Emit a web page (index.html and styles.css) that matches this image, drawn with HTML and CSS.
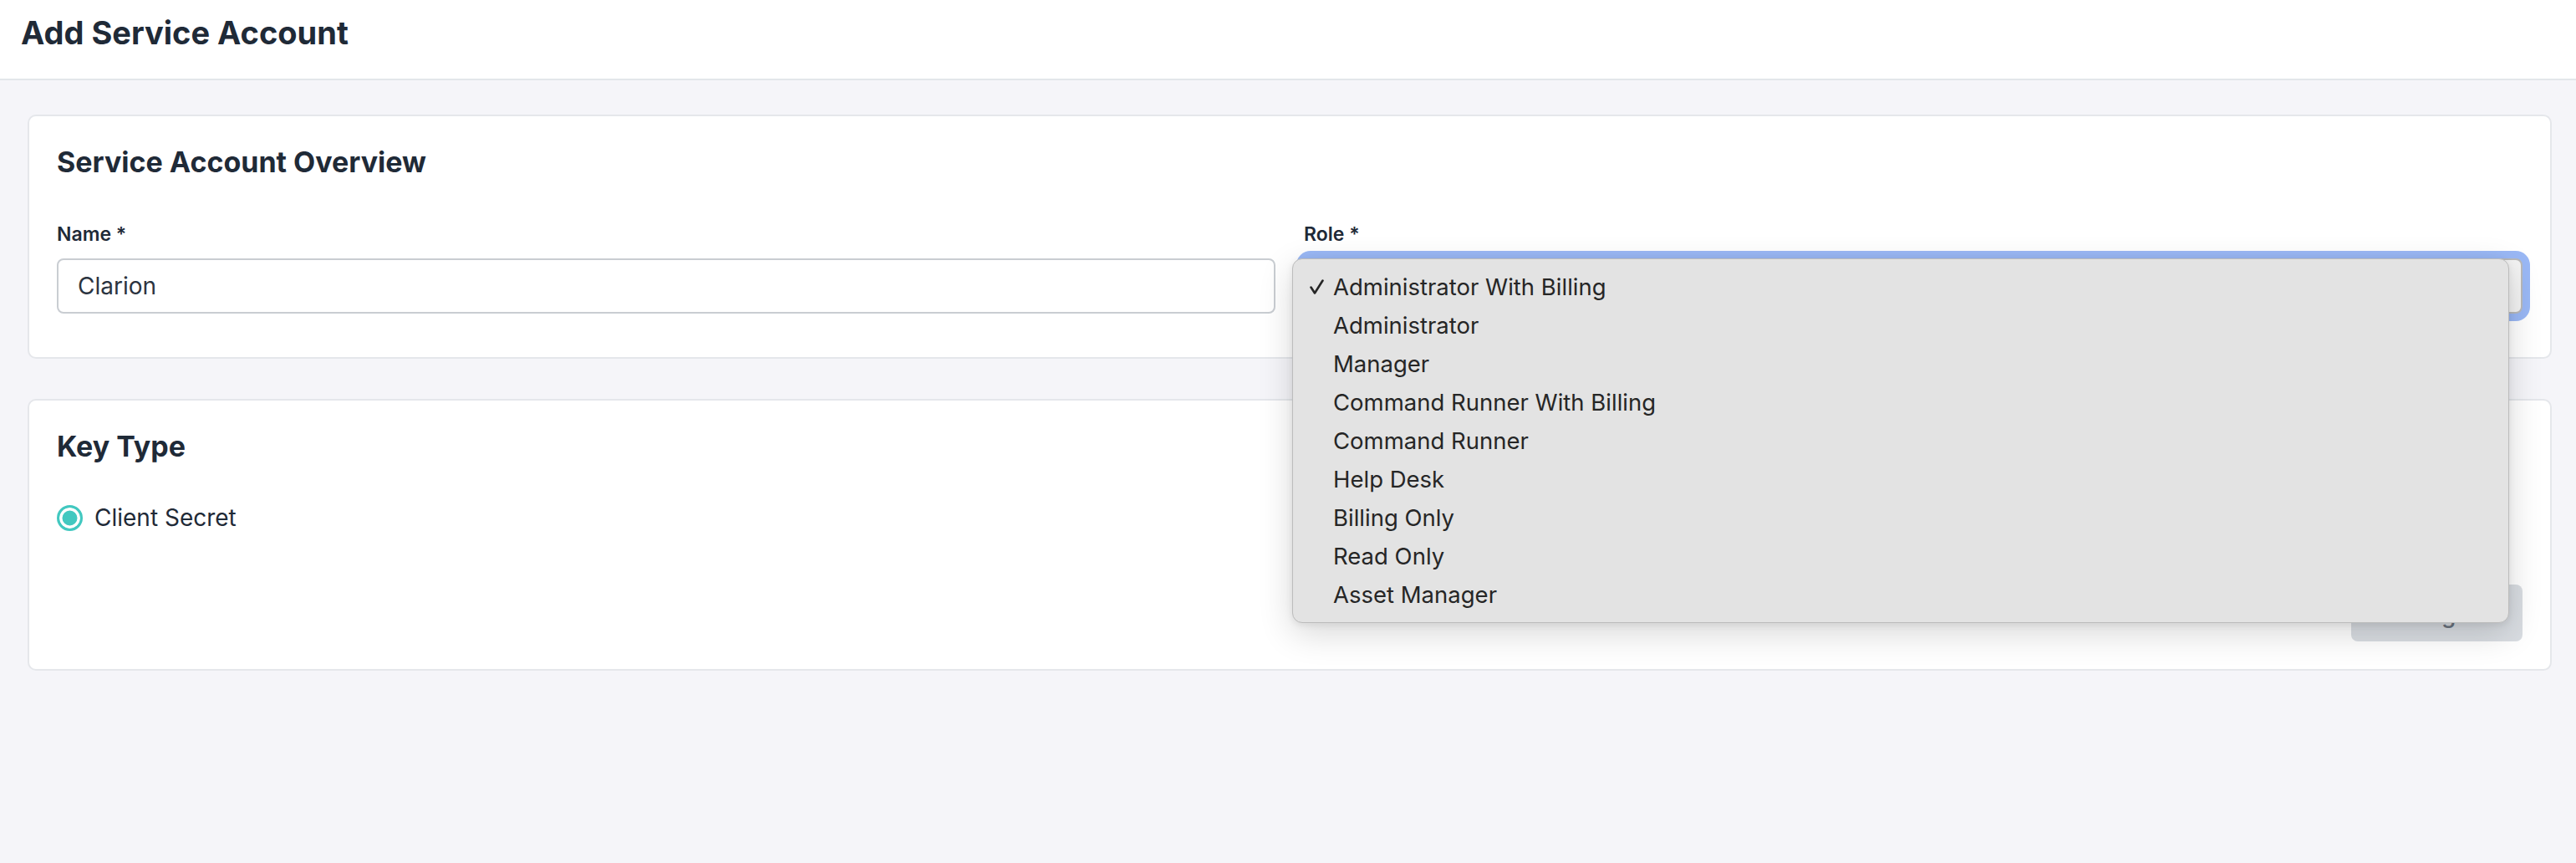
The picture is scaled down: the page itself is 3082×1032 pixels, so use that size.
FILE: index.html
```html
<!DOCTYPE html>
<html lang="en">
<head>
    <meta charset="UTF-8">
    <meta name="viewport" content="width=device-width, initial-scale=1.0">
    <title>Add Service Account</title>
    <link rel="stylesheet" href="styles.css">
</head>
<body>
    <header class="page-header">
        <h1>Add Service Account</h1>
    </header>

    <main class="content">
        <section class="card">
            <h2>Service Account Overview</h2>
            <div class="form-row">
                <div class="field">
                    <label for="name">Name *</label>
                    <input id="name" class="text-input" type="text" value="Clarion">
                </div>
                <div class="field">
                    <label>Role *</label>
                    <div class="select-wrap">
                        <div class="select focused"></div>
                        <!-- native popup menu, open -->
                        <div class="menu">
                            <div class="menu-item checked">
                                <span class="check">
                                    <svg width="17" height="18" viewBox="0 0 17 18"><path d="M1.5 9.5 L6 16.5 L15.5 1.5" fill="none" stroke="#262626" stroke-width="2.6" stroke-linecap="round" stroke-linejoin="round"/></svg>
                                </span>
                                <span>Administrator With Billing</span>
                            </div>
                            <div class="menu-item"><span class="check"></span><span>Administrator</span></div>
                            <div class="menu-item"><span class="check"></span><span>Manager</span></div>
                            <div class="menu-item"><span class="check"></span><span>Command Runner With Billing</span></div>
                            <div class="menu-item"><span class="check"></span><span>Command Runner</span></div>
                            <div class="menu-item"><span class="check"></span><span>Help Desk</span></div>
                            <div class="menu-item"><span class="check"></span><span>Billing Only</span></div>
                            <div class="menu-item"><span class="check"></span><span>Read Only</span></div>
                            <div class="menu-item"><span class="check"></span><span>Asset Manager</span></div>
                        </div>
                    </div>
                </div>
            </div>
        </section>

        <section class="card key-card">
            <h2>Key Type</h2>
            <div class="radio-row">
                <span class="radio checked"></span>
                <span class="radio-label">Client Secret</span>
            </div>
            <div class="card-footer">
                <button class="btn" disabled>Configure</button>
            </div>
        </section>
    </main>
</body>
</html>
```

FILE: styles.css
```css
* {
    margin: 0;
    padding: 0;
    box-sizing: border-box;
}

body {
    font-family: Inter, "Noto Sans", sans-serif;
    background: #f5f5f9;
    color: #1f2937;
    width: 3082px;
    height: 1032px;
    overflow: hidden;
}

.page-header {
    background: #fff;
    border-bottom: 2px solid #e3e6ea;
    height: 96px;
    padding: 15px 25px 0;
}

h1 {
    font-size: 38px;
    font-weight: 700;
    line-height: 48px;
    color: #1f2a37;
}

.content {
    padding: 41px 29px 0 33px;
}

.card {
    background: #fff;
    border: 2px solid #e5e7eb;
    border-radius: 10px;
    padding: 35px 33px 33px;
    margin-bottom: 48px;
}

h2 {
    font-size: 34px;
    font-weight: 700;
    line-height: 40px;
    color: #1f2a37;
}

.form-row {
    display: grid;
    grid-template-columns: 1fr 1fr;
    gap: 34px;
    margin-top: 53px;
    margin-bottom: 19px;
}

.field label {
    display: block;
    font-size: 23px;
    font-weight: 600;
    line-height: 27px;
    color: #1f2a37;
    margin-bottom: 15px;
}

.text-input {
    display: block;
    width: 100%;
    height: 66px;
    border: 2px solid #c9cdd2;
    border-radius: 8px;
    padding: 0 23px;
    font-family: inherit;
    font-size: 28px;
    color: #2b3440;
    background: #fff;
    outline: none;
}

.select-wrap {
    position: relative;
}

.select {
    height: 66px;
    border: 2px solid #b9b9b9;
    border-radius: 8px;
    background: #f3f3f3;
}

.select.focused {
    box-shadow: 0 0 0 9px #9ab8f5;
}

.menu {
    position: absolute;
    top: 0;
    left: -14px;
    width: 1456px;
    padding: 10px 0;
    background: #e3e3e3;
    border: 1px solid #bcbcbc;
    border-radius: 12px;
    box-shadow: 0 12px 40px rgba(0, 0, 0, 0.16), 0 2px 8px rgba(0, 0, 0, 0.08);
    z-index: 10;
}

.menu-item {
    display: flex;
    align-items: center;
    height: 46px;
    padding-left: 20px;
    font-size: 27.5px;
    color: #262626;
}

.check {
    width: 28px;
    display: flex;
    align-items: center;
}

.radio-row {
    display: flex;
    align-items: center;
    gap: 14px;
    margin-top: 48px;
    height: 34px;
}

.radio {
    width: 31px;
    height: 31px;
    border-radius: 50%;
    border: 3px solid #42c8c0;
    background: #42c8c0;
    box-shadow: inset 0 0 0 3.5px #fff;
}

.radio-label {
    font-size: 28px;
    color: #1f2a37;
}

.card-footer {
    display: flex;
    justify-content: flex-end;
    margin-top: 63px;
}

.btn {
    width: 205px;
    height: 68px;
    padding-top: 4px;
    border: none;
    border-radius: 8px;
    background: #d9dde2;
    color: #6b7480;
    font-family: inherit;
    font-size: 28px;
    font-weight: 500;
}
```
